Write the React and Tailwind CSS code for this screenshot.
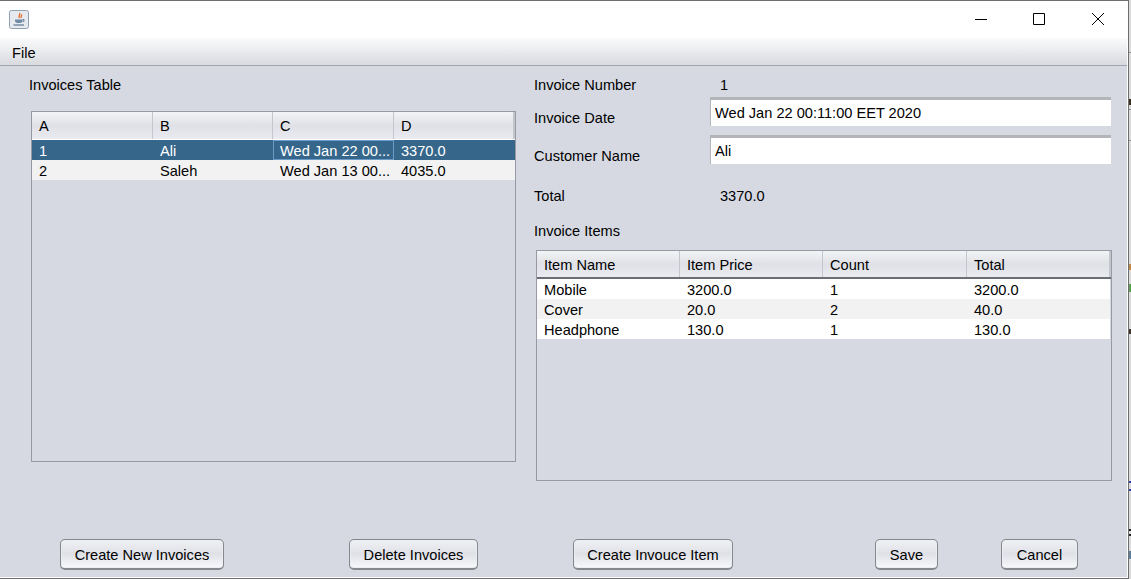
import React from 'react';

const invoices = [
  { id: '1', name: 'Ali', date: 'Wed Jan 22 00...', total: '3370.0' },
  { id: '2', name: 'Saleh', date: 'Wed Jan 13 00...', total: '4035.0' },
];

const items = [
  ['Mobile', '3200.0', '1', '3200.0'],
  ['Cover', '20.0', '2', '40.0'],
  ['Headphone', '130.0', '1', '130.0'],
];

// bits of the window behind, showing past the right edge: [gap above, height, colour class]
const behind = [
  [52, 1, 'bg-[#8f8f8f]'],
  [46, 6, 'bg-[#3a3020]'],
  [4, 1, 'bg-[#8f8f8f]'],
  [30, 1, 'bg-[#8f8f8f]'],
  [123, 6, 'bg-[#c08a50]'],
  [14, 8, 'bg-[#5aa050]'],
  [37, 5, 'bg-[#40352a]'],
  [147, 2, 'bg-[#3040b0]'],
  [6, 2, 'bg-[#3040b0]'],
  [38, 2, 'bg-[#222222]'],
  [3, 2, 'bg-[#222222]'],
  [15, 8, 'bg-[#6080a0]'],
];

const JavaIcon = () => (
  <svg width="20" height="19" viewBox="0 0 20 19">
    <rect x="0.5" y="0.5" width="19" height="18" rx="2" fill="#e6e9ee" stroke="#8fa0b0" />
    <path d="M10.500 3c1.500 1.500-1.500 2.500-.2 5M12.500 4.500c.8 1-1 1.500-.3 3.500" fill="none" stroke="#e07030" strokeWidth="1.400" />
    <path d="M6 9.500h7.500v1.500c0 1.500-1.500 2-3.700 2S6 12.500 6 11z" fill="#6f8aa5" />
    <path d="M13.500 9.500h1.500v1.800h-1.500" fill="none" stroke="#6a8199" />
    <path d="M4.500 15h10.500" stroke="#6a8199" strokeWidth="1.300" />
  </svg>
);

const HeaderCell = ({ children, width, last, low }) => (
  <div
    className={`flex items-center h-full pl-[7px] ${low ? 'pt-[4px]' : 'pt-[2px]'} bg-gradient-to-b from-[#f3f4f6] via-[#dfe1e6] to-[#e9ebf1] border-[#c3c6cd] ${last ? 'border-r-2' : 'border-r'} ${width}`}
  >
    {children}
  </div>
);

const PushButton = ({ children, className }) => (
  <button
    className={`h-[31px] pt-[4px] rounded-[5px] border border-b-2 border-[#85888d] bg-gradient-to-b from-[#f0f1f4] via-[#dfe1e7] to-[#f8f9fc] shadow-[inset_0_0_0_1px_#eceef2] ${className}`}
  >
    {children}
  </button>
);

const TextBox = ({ value }) => (
  <div className="flex items-center w-[401px] h-[29px] pl-[4px] pt-[2px] bg-white border-t-[3px] border-l border-[#b3b5b9]">
    {value}
  </div>
);

export default function App() {
  return (
    <div className="flex w-[1131px] h-[579px] bg-[#dcdcdc] overflow-hidden text-black text-[14.6px] font-['Liberation_Sans',Arial,sans-serif]">
      <div className="flex flex-col w-[1129px] h-[579px] border-t border-r border-b border-[#6e6e6e] bg-white shrink-0">
        {/* title bar */}
        <header className="flex items-center justify-between h-[37px] bg-white shrink-0">
          <div className="pl-[9px]">
            <JavaIcon />
          </div>
          <div className="flex items-center pb-[2px]">
            <div className="flex justify-center w-[56px]">
              <svg width="12" height="12" viewBox="0 0 12 12"><path d="M0 6.500h12" stroke="#000" /></svg>
            </div>
            <div className="flex justify-center w-[60px]">
              <svg width="12" height="12" viewBox="0 0 12 12"><path d="M.5.500h11v11H.5z" fill="none" stroke="#000" /></svg>
            </div>
            <div className="flex justify-center w-[58px]">
              <svg width="12" height="12" viewBox="0 0 12 12"><path d="M0 0l12 12M12 0L0 12" stroke="#000" /></svg>
            </div>
            <div className="w-[1px]" />
          </div>
        </header>

        {/* menu */}
        <nav className="flex items-center h-[28px] pl-[12px] pt-[4px] mr-[1px] bg-gradient-to-b from-[#fafbfb] to-[#d8dadf] border-b border-[#a3a6ae] shrink-0">
          File
        </nav>

        {/* main content */}
        <main className="flex flex-col flex-1 mr-[1px] mb-[1px] bg-[#d6d9e1]">
          <div className="flex h-[473px] shrink-0">
            <section className="w-[534px] pl-[29px] pt-[9px] shrink-0">
              <div className="h-[20px] leading-[20px]">Invoices Table</div>
              <div className="w-[485px] h-[351px] mt-[16px] ml-[2px] border border-[#979aa2]">
                <div className="flex h-[28px] border-b border-white">
                  <HeaderCell width="w-[121px]">A</HeaderCell>
                  <HeaderCell width="w-[120px]">B</HeaderCell>
                  <HeaderCell width="w-[121px]">C</HeaderCell>
                  <HeaderCell width="flex-1" last>D</HeaderCell>
                </div>
                {invoices.map((row, i) => (
                  <div
                    key={row.id}
                    className={`flex h-[20px] leading-[22px] ${i === 0 ? 'bg-[#36678b] text-white' : 'bg-[#f2f2f2]'}`}
                  >
                    <div className="w-[121px] pl-[7px]">{row.id}</div>
                    <div className="w-[120px] pl-[7px]">{row.name}</div>
                    <div className={`w-[121px] h-full ${i === 0 ? 'pl-[6px] leading-[20px] border border-[#6d9bc7]' : 'pl-[7px]'}`}>{row.date}</div>
                    <div className="flex-1 pl-[7px]">{row.total}</div>
                  </div>
                ))}
              </div>
            </section>

            <section className="flex-1 pt-[9px]">
              <div className="flex h-[20px] pt-[2px] items-center">
                <div className="w-[186px]">Invoice Number</div>
                <div>1</div>
              </div>
              <div className="flex mt-[2px]">
                <div className="w-[176px] pt-[11px]">Invoice Date</div>
                <TextBox value="Wed Jan 22 00:11:00 EET 2020" />
              </div>
              <div className="flex mt-[5px]">
                <div className="w-[176px] pt-[11px]">Customer Name</div>
                <TextBox value="Ali" />
              </div>
              <div className="flex items-center h-[20px] pt-[2px] mt-[18px]">
                <div className="w-[186px]">Total</div>
                <div>3370.0</div>
              </div>
              <div className="h-[20px] leading-[20px] mt-[15px]">Invoice Items</div>
              <div className="w-[576px] h-[231px] mt-[9px] ml-[2px] border border-[#979aa2]">
                <div className="flex h-[28px] border-b-2 border-[#6a6d73]">
                  <HeaderCell low width="w-[143px]">Item Name</HeaderCell>
                  <HeaderCell low width="w-[143px]">Item Price</HeaderCell>
                  <HeaderCell low width="w-[144px]">Count</HeaderCell>
                  <HeaderCell low width="flex-1" last>Total</HeaderCell>
                </div>
                {items.map((row, i) => (
                  <div key={row[0]} className={`flex h-[20px] leading-[22px] mr-[1px] ${i % 2 === 0 ? 'bg-white' : 'bg-[#f2f2f2]'}`}>
                    <div className="w-[143px] pl-[7px]">{row[0]}</div>
                    <div className="w-[143px] pl-[7px]">{row[1]}</div>
                    <div className="w-[144px] pl-[7px]">{row[2]}</div>
                    <div className="flex-1 pl-[7px]">{row[3]}</div>
                  </div>
                ))}
              </div>
            </section>
          </div>

          <footer className="flex shrink-0">
            <PushButton className="w-[164px] ml-[60px]">Create New Invoices</PushButton>
            <PushButton className="w-[129px] ml-[125px]">Delete Invoices</PushButton>
            <PushButton className="w-[160px] ml-[95px]">Create Invouce Item</PushButton>
            <PushButton className="w-[63px] ml-[142px]">Save</PushButton>
            <PushButton className="w-[77px] ml-[63px]">Cancel</PushButton>
          </footer>
        </main>
      </div>

      {/* sliver of the window behind */}
      <aside className="flex-1">
        {behind.map(([gap, h, color], i) => (
          <div key={i} className={color} style={{ marginTop: gap, height: h }} />
        ))}
      </aside>
    </div>
  );
}
